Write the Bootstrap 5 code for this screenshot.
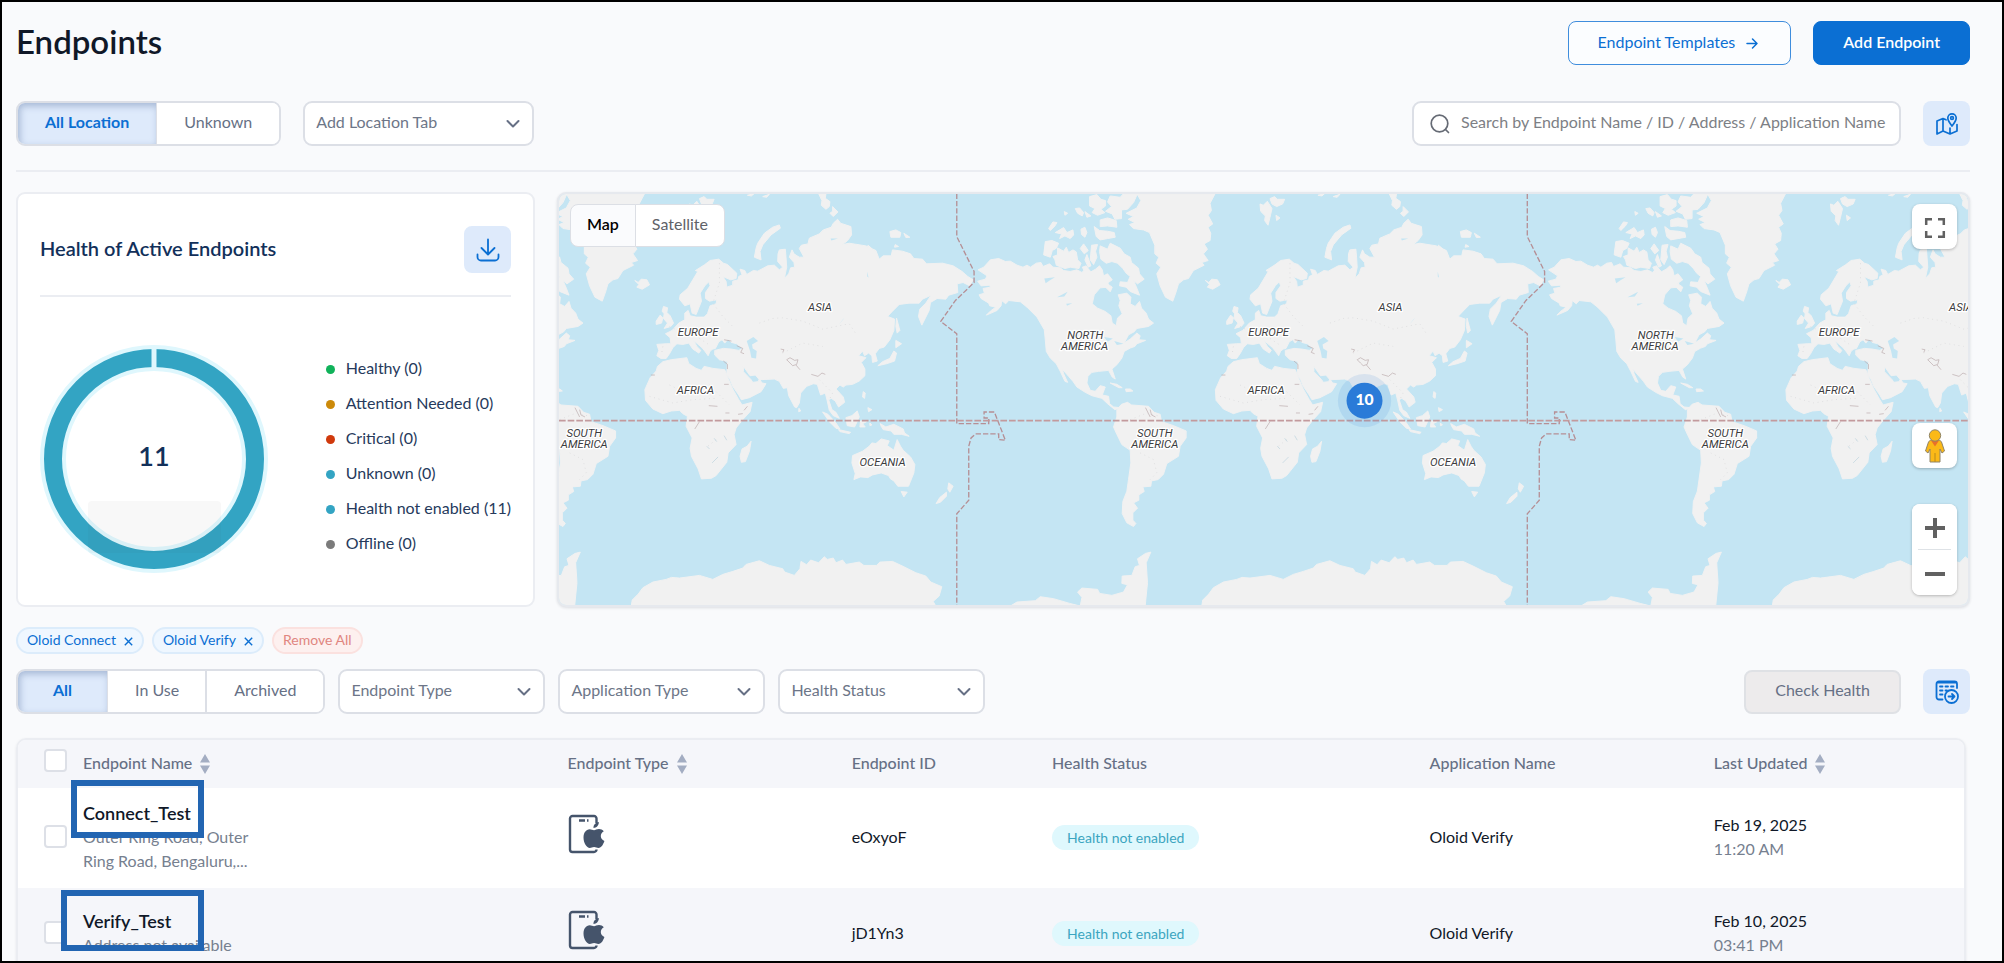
<!DOCTYPE html>
<html lang="en">
<head>
<meta charset="utf-8">
<meta name="viewport" content="width=device-width, initial-scale=1">
<title>Endpoints</title>
<link href="https://cdn.jsdelivr.net/npm/bootstrap@5.3.0/dist/css/bootstrap.min.css" rel="stylesheet">
<style>
  :root { --brand: #0b6fd3; --tint: #deeafb; --line: #dcdfe6; --soft: #ebedf2; --slate: #667085; --navy: #12305a; --ink: #101828; }
  body { font-family: Lato, "Liberation Sans", sans-serif; font-size: 16px; line-height: 24px; color: var(--ink); background: #f9fafc; }
  .frame { height: 100vh; overflow: hidden; border: 2px solid #000; padding: 19px 32px 0 14px; }
  .bar { display: flex; align-items: center; gap: 22px; }
  .bar-top { margin-bottom: 36px; }
  h1 { font-size: 33px; line-height: 40px; font-weight: 600; padding-bottom: 4px; }
  .btn { --bs-btn-font-size: 16px; --bs-btn-border-radius: 8px; --bs-btn-line-height: 24px; }
  .h-tool { height: 45px; }
  .btn-main { height: 44px; padding: 0 29px 3px; font-weight: 600; color: #fff; background: var(--brand); border: 1px solid var(--brand); }
  .btn-line { height: 44px; padding: 0 29px 3px; color: var(--brand); border: 1px solid #3f8ddd; background: #fbfdff; }
  .btn-idle, .btn-idle:disabled { height: 44px; padding: 0 29px 3px; color: var(--slate); background: #edebec; border: 2px solid #dfe1e5; opacity: 1; }
  .btn-square { width: 47px; height: 45px; padding: 0; color: var(--brand); background: var(--tint); border: 0; }
  .panel .btn-square { height: 47px; }
  .seg { border: 2px solid var(--line); border-radius: 9px; overflow: hidden; background: #fff; }
  .seg .btn { border: 0; border-left: 2px solid var(--line); border-radius: 0; padding: 0 27px 3px; color: var(--slate); background: #fff; }
  .seg .btn:first-child { border-left: 0; }
  .seg .btn.seg-wide { padding: 0 35px 3px; }
  .seg .btn.active { color: var(--brand); background: var(--tint); font-weight: 700; box-shadow: inset 2px 3px 7px rgba(60, 90, 140, .35); }
  .form-select { --bs-form-select-bg-img: none; height: 45px; padding: 0 40px 3px 11px; font-size: 16px; color: #6d7688; border: 2px solid var(--line); border-radius: 9px; background: #fff url("data:image/svg+xml,%3Csvg xmlns='http://www.w3.org/2000/svg' viewBox='0 0 14 10' fill='none' stroke='%23667085' stroke-width='2' stroke-linecap='round' stroke-linejoin='round'%3E%3Cpath d='M1.500 2l5.500 5.500L12.500 2'/%3E%3C/svg%3E") no-repeat right 12px center / 14px 10px; }
  .sel-wide { width: 231px; }
  .sel { width: 207px; }
  .filters { gap: 13px; }
  .search-box { width: 489px; height: 45px; border: 2px solid var(--line); border-radius: 9px; background: #fff; padding: 0 8px 0 15px; gap: 10px; }
  .search-box input { font-size: 16px; padding: 0 0 3px; }
  .search-box input::placeholder { color: #7d7f85; opacity: 1; }
  .rule { height: 2px; background: var(--soft); }
  .rule-top { margin-bottom: 20px; }
  .overview { display: grid; grid-template-columns: 519px minmax(0, 1fr); gap: 22px; min-height: 415px; }
  .panel { border: 2px solid var(--soft); border-radius: 9px; background: #fff; padding: 32px 22px 22px; }
  .panel h2 { font-size: 20px; line-height: 28px; font-weight: 600; color: var(--navy); padding-bottom: 4px; }
  .panel .rule { margin: 22px 0 48px; }
  .ring { width: 228px; height: 228px; }
  .legend-list { display: grid; gap: 11px; padding-bottom: 8px; color: #263a5c; }
  .legend-list > div { display: flex; align-items: center; gap: 11px; }
  .legend-dot { width: 9px; height: 9px; border-radius: 50%; margin-top: 4px; }
  .map-box { border: 2px solid #e6e9ee; border-radius: 9px; overflow: hidden; background: #c4e5f3; box-shadow: 0 1px 3px rgba(16, 24, 40, .12); }
  .map-box > svg { position: absolute; inset: 0; width: 100%; height: 100%; }
  .map-name { font: italic 400 34px Roboto, sans-serif; fill: #3c3c40; stroke: #fff; stroke-width: 8px; stroke-linejoin: round; paint-order: stroke; text-anchor: middle; }
  .map-count { font: 900 47px Lato, sans-serif; fill: #fff; text-anchor: middle; }
  .map-types { position: absolute; left: 11px; top: 10px; }
  .map-types .btn { height: 43px; padding: 0 16px 3px; border: 1px solid #dcdfe5; background: #fff; color: #606268; }
  .map-types .btn.active { background: #fafbfd; color: #000; font-weight: 600; }
  .map-tools { position: absolute; right: 11px; top: 10px; bottom: 10px; width: 45px; }
  .map-key { width: 45px; height: 45px; border: 0; padding: 0; border-radius: 8px; background: #fff; box-shadow: 0 1px 3px rgba(0, 0, 0, .25); }
  .map-zoom { height: auto; margin-top: 36px; }
  .chip-row { margin: 20px 0 15px; }
  .chip { height: 27px; padding: 0 9px 2px; border: 2px solid #dcecfb; border-radius: 14px; background: #eff7ff; color: var(--brand); font-size: 14px; line-height: 21px; }
  .chip-drop { background: #fdf0ef; border-color: #fbe1df; color: #e0867f; }
  .grid-box { border: 2px solid var(--soft); border-radius: 10px; overflow: hidden; margin-right: 4px; box-shadow: 0 1px 3px rgba(16, 24, 40, .08); }
  .grid-box table { table-layout: fixed; --bs-table-bg: transparent; }
  .grid-box th, .grid-box td { padding: 0 0 3px; border: 0; vertical-align: middle; color: var(--ink); }
  .grid-box thead tr { height: 48px; background: #f5f6fa; }
  .grid-box th { font-weight: 500; color: var(--slate); }
  .grid-box th:first-child, .grid-box td.icon-cell { padding-bottom: 8px; }
  .grid-box tbody tr { height: 92px; background: #f5f6fa; }
  .grid-box tbody tr:first-child { height: 100px; background: #fff; }
  .w-check { width: 65px; }
  .form-check-input { width: 23px; height: 23px; margin: 0 0 0 26px; border: 2px solid #dde0e7; border-radius: 6px; display: block; background-color: #fff; }
  .item-name { font-size: 18px; font-weight: 600; }
  .dim { color: #76808f; }
  .addr { width: 170px; }
  .pill { height: 25px; padding: 0 15px; border-radius: 13px; background: #dff8fd; color: #3ba5c0; font-size: 14px; line-height: 25px; vertical-align: middle; }
  .callout { position: absolute; border: 6px solid #2265b2; pointer-events: none; }
  .callout-a { inset: -21px auto auto -12px; width: 133px; height: 58px; }
  .callout-b { inset: -19px auto auto -22px; width: 143px; height: 61px; }
</style>
</head>
<body>
<div class="frame">
  <header class="bar bar-top">
    <h1 class="m-0 me-auto">Endpoints</h1>
    <button type="button" class="btn btn-line d-flex align-items-center gap-2">Endpoint Templates
      <svg width="18" height="18" viewBox="0 0 18 18" fill="none" stroke="currentColor" stroke-width="1.500" stroke-linecap="round" stroke-linejoin="round"><path d="M4 10.500h10M9.500 6l4.500 4.500L9.500 15"/></svg>
    </button>
    <button type="button" class="btn btn-main">Add Endpoint</button>
  </header>

  <div class="bar mb-4">
    <div class="seg h-tool btn-group" role="group" aria-label="Location">
      <button type="button" class="btn active">All Location</button>
      <button type="button" class="btn">Unknown</button>
    </div>
    <select class="form-select sel-wide" aria-label="Add Location Tab"><option>Add Location Tab</option></select>
    <label class="search-box d-flex align-items-center ms-auto">
      <svg class="flex-shrink-0" width="22" height="22" viewBox="0 0 22 22" fill="none" stroke="#666b75" stroke-width="1.700" stroke-linecap="round"><circle cx="10.500" cy="10.500" r="8.300"/><path d="M16.500 16.500l3 3"/></svg>
      <input type="text" class="form-control border-0 shadow-none bg-transparent" placeholder="Search by Endpoint Name / ID / Address / Application Name">
    </label>
    <button type="button" class="btn btn-square" aria-label="Toggle map">
      <svg width="26" height="26" viewBox="0 0 26 26" fill="none" stroke="currentColor" stroke-width="1.700" stroke-linejoin="round" stroke-linecap="round"><path d="M12 8.800L9 7.500 3 10v13l6-3 7 3 7-3v-6.500M9 7.500V20M16 17v6"/><path d="M18 15c-2.800-3.500-4.200-5.500-4.200-8a4.200 4.200 0 0 1 8.400 0c0 2.500-1.400 4.500-4.200 8z"/><circle cx="18" cy="7" r="1.400"/></svg>
    </button>
  </div>

  <div class="rule rule-top"></div>

  <section class="overview">
    <div class="panel">
      <div class="d-flex justify-content-between align-items-center">
        <h2 class="m-0">Health of Active Endpoints</h2>
        <button type="button" class="btn btn-square" aria-label="Download">
          <svg width="26" height="26" viewBox="0 0 26 26" fill="none" stroke="currentColor" stroke-width="1.800" stroke-linecap="round" stroke-linejoin="round"><path d="M13 2.500V17M6.500 11l6.500 6.500 6.500-6.500M2.500 17.500V20a3.500 3.500 0 0 0 3.500 3.500h14a3.500 3.500 0 0 0 3.500-3.500v-2.500"/></svg>
        </button>
      </div>
      <div class="rule"></div>
      <div class="d-flex align-items-center justify-content-between">
        <svg class="ring" viewBox="0 0 228 228" role="img" aria-label="11 endpoints">
          <circle cx="114" cy="114" r="101" fill="none" stroke="#dff7fd" stroke-width="26"/>
          <circle cx="114" cy="114" r="101" fill="none" stroke="#33a4c3" stroke-width="18"/>
          <path d="M114 1v24" stroke="#dff7fd" stroke-width="5"/>
          <rect x="48" y="156" width="133" height="52" rx="4" fill="#3c3c3c" fill-opacity=".035"/>
          <text x="114" y="121" text-anchor="middle" font-size="27" font-weight="600" fill="#12305a">11</text>
        </svg>
        <div class="legend-list">
          <div><span class="legend-dot" style="background:#10b25a"></span>Healthy (0)</div>
          <div><span class="legend-dot" style="background:#cc8a0a"></span>Attention Needed (0)</div>
          <div><span class="legend-dot" style="background:#d0390c"></span>Critical (0)</div>
          <div><span class="legend-dot" style="background:#33a4c3"></span>Unknown (0)</div>
          <div><span class="legend-dot" style="background:#33a4c3"></span>Health not enabled (11)</div>
          <div><span class="legend-dot" style="background:#7b7b7b"></span>Offline (0)</div>
        </div>
      </div>
    </div>

    <div class="map-box position-relative">
      <svg viewBox="-1386 41 4233 1237" preserveAspectRatio="xMidYMid slice" role="img" aria-label="World map of endpoints">
        <defs>
          <g id="world">
            <g fill="#f1f1f1" stroke="#f1f1f1" stroke-width="3" stroke-linejoin="round">
              <!-- North America and the Arctic islands -->
              <path d="M-127 270L-110 262-90 240-65 236-45 245-30 244-10 256 8 262 20 256 30 262 48 250 62 248 68 260 88 252 98 262 120 264 130 272 150 275 170 270 185 278 200 262 212 276 226 268 238 258 246 270 250 288 262 282 276 300 264 308 262 322 240 324 222 345 216 372 232 385 255 395 272 408 276 430 288 438 292 415 306 402 296 378 300 362 294 345 320 340 332 352 330 372 345 380 358 365 364 385 378 400 385 418 400 430 385 440 350 446 342 456 325 465 312 490 330 478 350 460 360 468 356 480 376 482 350 492 344 500 330 505 312 515 305 535 290 555 275 568 285 598 276 592 265 572 235 575 215 578 203 590 200 610 210 632 225 635 240 618 255 622 246 646 265 650 268 672 280 682 298 684 284 690 262 672 245 656 215 648 195 638 170 622 158 605 145 590 126 568 130 582 142 608 134 605 120 575 108 552 90 535 78 515 75 480 72 450 50 412 20 382 0 366-35 362-44 372-56 362-58 378-70 392-102 406-90 394-74 382-92 378-95 370-118 356-124 345-108 340-112 326-90 322-92 316-118 318-128 304-105 298-100 288Z"/>
              <path d="M240 198L262 208 270 190 300 205 312 222 330 232 334 248 355 265 358 282 372 298 352 312 340 302 350 325 358 346 330 335 318 322 298 318 300 306 322 308 330 290 318 280 308 266 292 250 275 245 258 250 242 238 238 215ZM75 185L95 182 115 190 108 205 96 212 90 232 70 225ZM112 204L130 214 138 202 145 218 158 210 168 216 172 240 182 250 176 266 150 262 134 266 108 256 104 240 98 230 112 225ZM105 158L130 143 140 158 158 150 160 165 150 176 134 168 118 176 124 162ZM85 146L98 126 110 128 104 138 90 152ZM165 86L178 84 190 98 186 108 172 100ZM194 95L212 108 200 112ZM182 148L194 142 200 158 194 172 184 164ZM180 206L190 192 204 212 192 222ZM214 196L232 194 226 214 230 232 220 254 210 240ZM222 140L238 152 262 154 282 158 285 172 262 176 240 180 228 170ZM240 120L262 114 288 122 290 142 262 138 240 140ZM208 50L230 44 242 58 256 62 256 78 242 88 254 98 232 106 216 98 224 86 208 78ZM270 48L300 52 310 41 352 41 340 68 322 88 304 90 304 116 284 118 276 102 256 94 274 80 262 66ZM186 262L198 258 206 276 194 276ZM200 224L212 258 204 262 194 240ZM256 308L276 322 270 336 256 322ZM132 95L142 100 134 106Z"/>
              <!-- Greenland, Iceland, Svalbard -->
              <path d="M350 41L585 41 570 70 574 92 564 106 578 132 564 142 572 160 570 182 552 192 562 208 550 222 564 242 545 248 552 256 520 272 505 296 490 300 475 312 468 336 458 364 436 352 420 318 410 282 422 262 408 250 416 232 404 222 404 196 388 158 370 150 340 146 328 134 344 128 324 118 340 110 318 100 350 84 362 62ZM556 302L566 308 575 298 592 300 600 315 578 328 562 322 568 314ZM720 72L730 76 742 64 756 86 750 112 744 136 734 122 736 108 722 94ZM750 56L764 50 772 58 794 58 788 72 770 80 756 72ZM768 106L780 114 770 122ZM894 46L914 41 906 48ZM940 50L960 43 952 52ZM1108 41L1130 41 1128 55 1142 65 1140 80 1130 88 1116 76 1118 62ZM1150 80L1166 96 1152 110 1142 100 1150 94ZM990 135L993 145 965 165 940 195 932 215 935 240 915 232 920 205 925 190 945 160 970 142ZM1322 155L1340 150 1355 158 1352 172 1325 172ZM1364 160L1382 172 1370 173ZM1256 196L1268 206 1258 206ZM1338 194L1348 200 1336 202Z"/>
              <!-- Eurasia -->
              <path d="M690 358L692 345 715 325 730 300 745 275 738 272 765 255 782 242 808 238 822 250 834 254 862 280 860 296 844 300 820 290 830 305 832 322 850 316 850 304 866 300 868 290 878 285 872 268 886 272 892 284 912 272 925 274 955 258 975 256 990 270 1000 262 985 245 986 222 990 210 1008 208 1010 232 1012 262 1005 296 1018 282 1024 264 1036 262 1034 248 1020 232 1028 210 1034 222 1050 232 1064 232 1050 206 1056 196 1076 192 1080 175 1110 162 1122 150 1146 142 1152 130 1165 118 1174 130 1205 140 1207 165 1195 182 1180 194 1200 190 1250 198 1280 212 1290 238 1302 228 1326 228 1330 210 1360 214 1384 222 1394 236 1420 238 1432 252 1480 250 1512 258 1539 275 1556 290 1572 300 1562 318 1542 308 1524 312 1526 338 1499 346 1490 358 1464 356 1444 368 1440 392 1418 436 1408 410 1412 388 1430 370 1446 346 1420 358 1410 370 1380 370 1350 374 1330 394 1315 410 1336 418 1334 452 1322 480 1305 502 1290 506 1278 522 1284 544 1270 548 1268 528 1258 520 1246 528 1240 514 1228 528 1250 534 1236 548 1247 568 1247 588 1230 604 1210 614 1190 616 1182 622 1172 616 1160 628 1182 652 1186 668 1168 682 1158 664 1146 656 1138 660 1148 690 1160 698 1170 716 1152 708 1140 692 1134 664 1128 640 1114 646 1104 614 1092 612 1072 620 1054 640 1050 670 1042 684 1036 682 1018 648 1014 624 1002 626 990 605 975 598 930 600 918 586 902 588 882 560 882 576 905 600 910 608 926 606 930 598 938 610 950 612 935 636 900 654 876 660 868 646 850 620 842 600 832 584 834 545 810 540 796 526 796 512 822 506 845 508 868 512 880 506 862 492 846 488 836 478 826 490 818 480 808 486 798 506 790 508 782 514 776 528 766 514 758 504 744 492 732 482 742 500 754 512 748 520 730 508 718 490 700 494 682 492 670 504 660 522 650 536 634 536 622 528 628 512 622 494 650 492 664 492 662 474 648 462 668 452 688 430 706 420 706 400 716 392 722 408 740 412 764 412 774 402 782 378 800 372 802 360 780 364 768 356 768 338 782 318 778 306 766 318 752 340 756 364 748 384 740 404 728 400 722 372 706 378Z"/>
              <path d="M642 380L654 384 652 398 662 408 672 430 664 440 644 446 654 430 642 416 644 402 638 394ZM620 424L632 406 640 414 636 430 620 434Z"/>
              <!-- Africa and Madagascar -->
              <path d="M640 546L665 540 712 534 718 552 740 566 756 572 764 560 790 566 826 570 836 596 850 628 868 660 878 676 908 668 902 696 880 720 860 745 854 765 860 795 836 820 832 848 800 888 786 896 756 898 746 868 726 830 722 806 728 775 710 740 714 710 700 702 690 692 665 694 640 702 610 688 588 662 586 630 602 594 620 574 624 560ZM905 785L900 815 888 846 876 848 872 830 878 808 893 800Z"/>
              <!-- Asian islands -->
              <path d="M1120 697L1136 704 1160 730 1172 748 1160 746 1140 726ZM1168 750L1204 758 1200 762 1172 756ZM1190 714L1208 708 1224 694 1230 712 1216 742 1194 738ZM1234 724L1252 726 1240 732 1248 742 1232 742ZM1262 730L1268 736 1262 738ZM1293 732L1310 742 1334 734 1362 748 1366 760 1380 770 1356 764 1334 764 1326 754 1302 750 1296 740ZM1242 636L1248 640 1246 656 1240 652ZM1256 684L1268 690 1258 696ZM1049 686L1054 694 1048 696ZM1342 415L1352 452 1344 460 1340 440ZM1340 482L1357 492 1340 504ZM1334 514L1342 520 1336 544 1312 552 1286 558 1300 546 1322 536Z"/>
              <!-- Australia and New Zealand -->
              <path d="M1210 828L1240 815 1260 800 1268 790 1280 792 1296 778 1320 784 1314 798 1334 812 1344 780 1354 800 1362 812 1384 832 1397 855 1394 880 1384 905 1378 920 1346 920 1334 904 1324 898 1318 888 1296 880 1270 886 1256 894 1234 892 1214 900 1218 882 1208 850ZM1356 936L1374 938 1364 952ZM1499 910L1512 920 1502 938 1496 928ZM1492 938L1492 950 1474 968 1461 972 1472 954Z"/>
              <path d="M270 610L290 614 306 624 296 624ZM316 628L330 628 338 634 318 636Z"/>
              <!-- South America -->
              <path d="M290 690L304 674 322 668 334 676 385 680 402 698 420 704 424 726 460 738 498 754 498 775 480 800 475 830 440 852 430 884 414 900 394 904 392 920 368 922 372 936 356 946 356 962 340 970 352 986 338 1000 338 1022 347 1032 340 1041 320 1030 306 1002 308 966 320 935 325 900 332 850 330 812 305 795 288 760 280 742 290 712Z"/>
              <!-- Antarctica -->
              <path d="M545 1280L548 1262 566 1244 580 1225 610 1208 650 1200 666 1194 690 1196 750 1188 790 1200 820 1185 850 1176 880 1166 890 1155 930 1144 960 1158 1000 1168 1006 1178 1035 1188 1052 1168 1055 1146 1072 1156 1084 1142 1108 1150 1125 1132 1134 1140 1152 1136 1160 1150 1180 1142 1190 1155 1230 1148 1244 1158 1282 1158 1292 1148 1330 1146 1360 1160 1400 1180 1430 1190 1445 1208 1478 1222 1470 1250 1452 1266 1460 1280ZM-30 1280L-10 1268 45 1264 60 1252 100 1258 148 1272 180 1280 185 1254 172 1238 185 1226 232 1230 238 1242 275 1248 310 1238 322 1216 305 1212 306 1190 335 1188 345 1162 358 1158 352 1138 376 1122 392 1118 378 1150 382 1210 375 1280Z"/>
            </g>
            <g fill="#c4e5f3">
              <path d="M892 484L912 472 926 484 908 494 910 506 922 514 920 536 906 534 902 514ZM738 514L732 528 726 520ZM712 506L716 516 708 512ZM72 296L104 292 88 302 76 310ZM110 352L142 336 132 350ZM138 372L156 370 140 378ZM252 472L278 476 262 486ZM282 484L310 492 290 496ZM1144 176L1166 176 1146 182ZM1180 420L1186 414 1168 436ZM1254 275L1258 294 1254 290Z"/>
            </g>
            <g fill="none" stroke="#b9a9ab" stroke-width="2">
              <path d="M1012 540l10-6 14 8 10-2-4 14-12 4-8-8zM1040 556l12 14M994 508l10 2-4 8M822 544l12 10v14M862 498l18 8-6 12 10 4M1086 584l20 6 12-10 10 4M824 614h14M778 678l26 2M866 704l14-2M884 692l10-12M824 480l22 4M604 586h12M376 684l14 28M390 690l4 16 12 6M736 748l14-22M828 700h12"/>
            </g>
            <g fill="none" stroke="#d6d6d8" stroke-width="2" stroke-dasharray="3 11">
              <path d="M930 430l40-14 30-2 60 10 60 24 80-16 20 30M1000 520l60-30 60 10M640 500l-4 24M750 476l30 20M660 616l50 24 50-6M780 616l60 60M600 650l70 20 60-10 70-4M800 780l-30 24M330 720l50-20 40 10M360 820l40 20 10 40-20 20M810 250v60l-20 60 30 40 30 30M1110 600l40 40-10 20M660 440l60 30"/>
            </g>
            <path d="M772 800l8 8M788 850l18-18M794 776l8 10M824 768l8 14" stroke="#b9d2dc" stroke-width="2"/>
            <path d="M-191 41V170L-139 275V308L-195 362-239 425-191 462V732H-95V715H-109V697H-78L-45 782-65 780V763H-135L-148 775-155 800V962L-191 1003V1280" fill="none" stroke="#b58f95" stroke-width="4" stroke-dasharray="16 6"/>
            <text class="map-name" x="195" y="479">NORTH</text><text class="map-name" x="193" y="512">AMERICA</text>
            <text class="map-name" x="404" y="773">SOUTH</text><text class="map-name" x="404" y="804">AMERICA</text>
            <text class="map-name" x="746" y="468">EUROPE</text>
            <text class="map-name" x="738" y="642">AFRICA</text>
            <text class="map-name" x="1112" y="395">ASIA</text>
            <text class="map-name" x="1300" y="860">OCEANIA</text>
          </g>
        </defs>
        <use href="#world" x="-1714"/>
        <use href="#world"/>
        <use href="#world" x="1714"/>
        <path d="M-1386 723H2847" stroke="#c39a9d" stroke-width="5" stroke-dasharray="20 6"/>
        <circle cx="1034" cy="663" r="80" fill="#2a7bd8" fill-opacity=".12"/>
        <circle cx="1034" cy="663" r="54" fill="#2a7bd8"/>
        <text class="map-count" x="1034" y="677">10</text>
      </svg>
      <div class="map-types btn-group" role="group" aria-label="Map type">
        <button type="button" class="btn active">Map</button>
        <button type="button" class="btn">Satellite</button>
      </div>
      <div class="map-tools d-flex flex-column">
        <button type="button" class="map-key" aria-label="Full screen">
          <svg width="22" height="22" viewBox="0 0 22 22" fill="none" stroke="#616161" stroke-width="2.500"><path d="M2.200 8V2.200H8M14 2.200h5.800V8M19.800 14v5.800H14M8 19.800H2.200V14"/></svg>
        </button>
        <button type="button" class="map-key mt-auto" aria-label="Street view">
          <svg width="20" height="34" viewBox="0 0 20 34"><path d="M5.500 11h9l2 2 3 9-2.500 2-2-4v13H5V20l-2 4-2.500-2 3-9z" fill="#fbb917" stroke="#8f8468" stroke-width="1"/><path d="M6 11.500h8l-4 6z" fill="#e9702a"/><path d="M10 24v9" stroke="#b98a1c"/><circle cx="10" cy="6.500" r="5.700" fill="#fbb917" stroke="#8f8468"/></svg>
        </button>
        <div class="map-key map-zoom d-flex flex-column align-items-center">
          <button type="button" class="map-key shadow-none" aria-label="Zoom in"><svg width="20" height="20" viewBox="0 0 20 20" stroke="#616161" stroke-width="4"><path d="M0 10h20M10 0v20"/></svg></button>
          <span class="border-top w-75"></span>
          <button type="button" class="map-key shadow-none" aria-label="Zoom out"><svg width="20" height="20" viewBox="0 0 20 20" stroke="#616161" stroke-width="4"><path d="M0 10h20"/></svg></button>
        </div>
      </div>
    </div>
  </section>

  <div class="chip-row d-flex gap-2">
    <button type="button" class="chip d-flex align-items-center gap-2">Oloid Connect <svg class="mt-1" width="9" height="9" viewBox="0 0 9 9" stroke="currentColor" stroke-width="1.400"><path d="M.8.800l7.400 7.400M8.200.800L.8 8.200"/></svg></button>
    <button type="button" class="chip d-flex align-items-center gap-2">Oloid Verify <svg class="mt-1" width="9" height="9" viewBox="0 0 9 9" stroke="currentColor" stroke-width="1.400"><path d="M.8.800l7.400 7.400M8.200.800L.8 8.200"/></svg></button>
    <button type="button" class="chip chip-drop">Remove All</button>
  </div>

  <div class="bar mb-4">
    <div class="filters d-flex me-auto">
      <div class="seg h-tool btn-group" role="group" aria-label="Status">
        <button type="button" class="btn seg-wide active">All</button>
        <button type="button" class="btn">In Use</button>
        <button type="button" class="btn">Archived</button>
      </div>
      <select class="form-select sel" aria-label="Endpoint Type"><option>Endpoint Type</option></select>
      <select class="form-select sel" aria-label="Application Type"><option>Application Type</option></select>
      <select class="form-select sel" aria-label="Health Status"><option>Health Status</option></select>
    </div>
    <button type="button" class="btn btn-idle" disabled>Check Health</button>
    <button type="button" class="btn btn-square" aria-label="Export table">
      <svg width="26" height="26" viewBox="0 0 26 26" fill="none" stroke="currentColor" stroke-width="1.800" stroke-linecap="round" stroke-linejoin="round"><path d="M8.500 20.500H5A2.500 2.500 0 0 1 2.500 18V5A2.500 2.500 0 0 1 5 2.500h15.500A2.500 2.500 0 0 1 23 5v4M3 3.500h19.500"/><path d="M6 7.500h2.500M11.500 7.500H14M17 7.500h2.500M6 11.500h2.500M11.500 11.500H13M6 15.500h2.500" /><circle cx="17.500" cy="17.500" r="6.500"/><path d="M14.500 17.500h6M18 15l2.500 2.500L18 20"/></svg>
    </button>
  </div>

  <div class="grid-box">
    <table class="table mb-0">
      <colgroup><col class="w-check"><col style="width:24.9%"><col style="width:14.6%"><col style="width:10.3%"><col style="width:19.4%"><col style="width:14.6%"><col></colgroup>
      <thead>
        <tr>
          <th><input class="form-check-input" type="checkbox" aria-label="Select all"></th>
          <th>Endpoint Name <svg class="ms-1" width="10" height="20" viewBox="0 0 10 20" fill="#a3adc2"><path d="M5 0l5 8.500H0zM5 20l-5-8.500h10z"/></svg></th>
          <th>Endpoint Type <svg class="ms-1" width="10" height="20" viewBox="0 0 10 20" fill="#a3adc2"><path d="M5 0l5 8.500H0zM5 20l-5-8.500h10z"/></svg></th>
          <th>Endpoint ID</th>
          <th>Health Status</th>
          <th>Application Name</th>
          <th>Last Updated <svg class="ms-1" width="10" height="20" viewBox="0 0 10 20" fill="#a3adc2"><path d="M5 0l5 8.500H0zM5 20l-5-8.500h10z"/></svg></th>
        </tr>
      </thead>
      <tbody>
        <tr>
          <td><input class="form-check-input" type="checkbox" aria-label="Select Connect_Test"></td>
          <td><div class="position-relative"><div class="item-name">Connect_Test</div><div class="dim addr">Outer Ring Road, Outer Ring Road, Bengaluru,...</div><span class="callout callout-a"></span></div></td>
          <td class="icon-cell">
            <svg width="38" height="40" viewBox="0 0 38 40" aria-label="iOS device"><g id="device"><path d="M28.500 9V4.500A2.500 2.500 0 0 0 26 2H4.500A2.500 2.500 0 0 0 2 4.500v31A2.500 2.500 0 0 0 4.500 38H26a2.500 2.500 0 0 0 2.500-2.500" fill="none" stroke="#45546b" stroke-width="2.400"/><path d="M11 6.500h6M19 6.500h1.500" stroke="#45546b" stroke-width="2.600"/><path d="M26 16.300c-1.300 0-2.600-1-4.200-1-3.900 0-6.300 3.600-6.300 8.200 0 5.400 3.200 10.500 6.300 10.500 1.600 0 2.400-1 4.300-1s2.600 1 4.300 1c3 0 5-4 6-7-4.500-1.900-4.800-7.400-.6-9.700-1.200-1.500-3-2.200-4.800-2.200-2.200 0-3.600 1.200-5 1.200zM25.500 14c-.3-3 2.400-5.800 5.300-6 .3 3.200-2.400 6-5.300 6z" fill="#45546b"/></g></svg>
          </td>
          <td>eOxyoF</td>
          <td><span class="pill d-inline-block">Health not enabled</span></td>
          <td>Oloid Verify</td>
          <td>Feb 19, 2025<div class="dim">11:20 AM</div></td>
        </tr>
        <tr>
          <td><input class="form-check-input" type="checkbox" aria-label="Select Verify_Test"></td>
          <td><div class="position-relative"><div class="item-name">Verify_Test</div><div class="dim addr">Address not available</div><span class="callout callout-b"></span></div></td>
          <td class="icon-cell"><svg width="38" height="40" viewBox="0 0 38 40" aria-label="iOS device"><use href="#device"/></svg></td>
          <td>jD1Yn3</td>
          <td><span class="pill d-inline-block">Health not enabled</span></td>
          <td>Oloid Verify</td>
          <td>Feb 10, 2025<div class="dim">03:41 PM</div></td>
        </tr>
      </tbody>
    </table>
  </div>
</div>
<script src="https://cdn.jsdelivr.net/npm/bootstrap@5.3.0/dist/js/bootstrap.bundle.min.js"></script>
</body>
</html>
